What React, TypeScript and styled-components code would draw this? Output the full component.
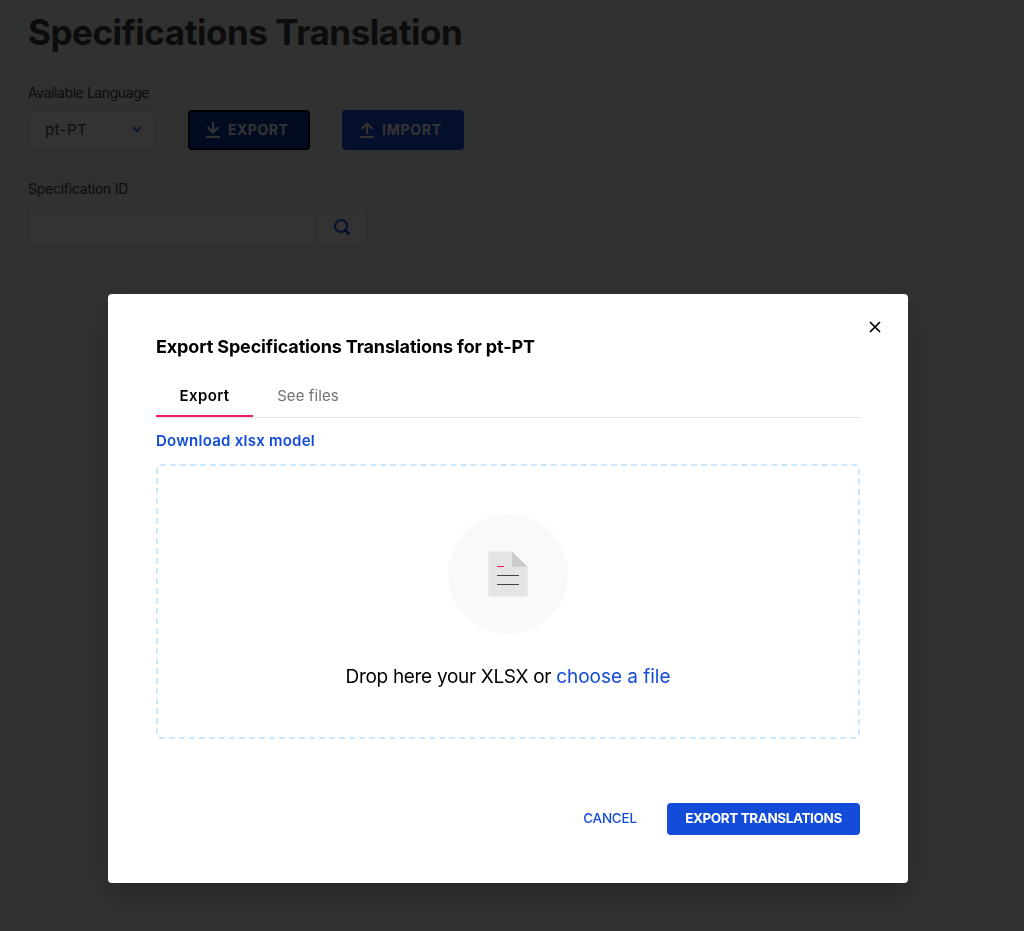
import React from 'react';
import styled, { createGlobalStyle } from 'styled-components';

const GlobalStyle = createGlobalStyle`
  *, *::before, *::after { box-sizing: border-box; }
  html, body { margin: 0; height: 100%; overflow: hidden; background: #f0f4f2; }
  body { font-family: Inter, "Liberation Sans", sans-serif; color: #3f3f40; }
  button, input { font-family: inherit; margin: 0; }
  h1, h2, p { margin: 0; }
`;

const Page = styled.main`
  height: 931px;
  padding: 8px 28px;
  display: flex;
  flex-direction: column;
  align-items: flex-start;
`;

const PageTitle = styled.h1`
  font-size: 35px;
  line-height: 48px;
  font-weight: 700;
  letter-spacing: -0.47px;
  white-space: nowrap;
`;

const Label = styled.label<{ $spacing: string }>`
  display: block;
  height: 20px;
  font-size: 14px;
  line-height: 20px;
  letter-spacing: ${p => p.$spacing};
  white-space: nowrap;
`;

const ControlRow = styled.div`
  display: flex;
  align-items: flex-end;
  gap: 32px;
  margin-top: 27px;
`;

const LanguageField = styled.div`
  width: 128px;
`;

const Select = styled.div`
  display: flex;
  align-items: center;
  justify-content: space-between;
  height: 40px;
  margin-top: 7px;
  padding: 0 12px 1px 15px;
  border: 2px solid #e7ecea;
  border-radius: 4px;
  background: #fff;
  font-size: 15px;
  letter-spacing: 0.4px;
`;

const ActionButton = styled.button<{ $focused?: boolean }>`
  display: flex;
  align-items: center;
  gap: 6px;
  width: 122px;
  height: 40px;
  padding: 0 0 1px ${p => (p.$focused ? '14px' : '16px')};
  border: ${p => (p.$focused ? '2px solid #000' : '0')};
  border-radius: 4px;
  background: ${p => (p.$focused ? '#0c389f' : '#134cd8')};
  color: #fff;
  font-size: 14px;
  font-weight: 700;
  letter-spacing: ${p => (p.$focused ? '0.5px' : '0.75px')};
`;

const SpecificationField = styled.div`
  margin-top: 29px;
`;

const SearchGroup = styled.div`
  display: flex;
  width: 340px;
  height: 40px;
  margin-top: 8px;
  border: 2px solid #e7ecea;
  border-radius: 4px;
  background: #fff;
`;

const SearchInput = styled.input`
  flex: 1;
  min-width: 0;
  border: 0;
  border-right: 2px solid #e7ecea;
  background: transparent;
`;

const SearchButton = styled.button`
  display: flex;
  align-items: center;
  justify-content: center;
  width: 48px;
  padding: 0;
  border: 0;
  background: transparent;
`;

const Overlay = styled.div`
  position: fixed;
  inset: 0;
  display: flex;
  justify-content: center;
  align-items: flex-start;
  padding: 294px 8px 0 0;
  background: rgba(0, 0, 0, 0.8);
`;

const Dialog = styled.section`
  display: flex;
  flex-direction: column;
  width: 800px;
  height: 589px;
  padding: 20px 48px 48px;
  border-radius: 4px;
  background: #fff;
  color: #000;
  box-shadow: 0 12px 24px rgba(0, 0, 0, 0.22);
`;

const CloseButton = styled.button`
  display: flex;
  align-self: flex-end;
  margin-right: -28px;
  padding: 4px;
  border: 0;
  background: transparent;
`;

const DialogTitle = styled.h2`
  height: 24px;
  margin-top: -5px;
  font-size: 18px;
  line-height: 24px;
  font-weight: 700;
  letter-spacing: -0.15px;
  white-space: nowrap;
`;

const Tabs = styled.div`
  display: flex;
  height: 42px;
  margin-top: 17px;
  border-bottom: 1px solid #e3e4e6;
`;

const Tab = styled.button<{ $active?: boolean }>`
  width: ${p => (p.$active ? '97px' : '110px')};
  height: 41px;
  padding: 0 0 1px;
  border: 0;
  border-bottom: 2px solid ${p => (p.$active ? '#f71963' : 'transparent')};
  background: transparent;
  color: ${p => (p.$active ? '#000' : '#727273')};
  font-size: 15px;
  font-weight: ${p => (p.$active ? 600 : 400)};
  letter-spacing: ${p => (p.$active ? '0.4px' : '0.1px')};
`;

const ModelLink = styled.a`
  align-self: flex-start;
  height: 20px;
  margin-top: 13px;
  color: #134cd8;
  font-size: 15px;
  line-height: 20px;
  font-weight: 600;
  letter-spacing: 0.25px;
  white-space: nowrap;
`;

const DropZone = styled.div`
  display: flex;
  flex-direction: column;
  align-items: center;
  height: 275px;
  margin-top: 13px;
  padding-top: 48px;
  border: 2px dashed #cce8ff;
  border-radius: 4px;
`;

const DropText = styled.p`
  margin-top: 28px;
  font-size: 19px;
  line-height: 30px;
  letter-spacing: -0.31px;
  white-space: nowrap;
`;

const FileLink = styled.a`
  color: #134cd8;
  letter-spacing: -0.03px;
`;

const Footer = styled.footer`
  display: flex;
  justify-content: flex-end;
  gap: 12px;
  margin-top: 64px;
`;

const FooterButton = styled.button<{ $primary?: boolean }>`
  width: ${p => (p.$primary ? '193px' : '90px')};
  height: 32px;
  padding: 0 0 2px;
  border: 0;
  border-radius: 4px;
  background: ${p => (p.$primary ? '#134cd8' : 'transparent')};
  color: ${p => (p.$primary ? '#fff' : '#134cd8')};
  font-size: 13.5px;
  font-weight: ${p => (p.$primary ? 700 : 500)};
  letter-spacing: ${p => (p.$primary ? '-0.4px' : '-0.25px')};
  white-space: nowrap;
`;

const TransferIcon = ({ up }: { up?: boolean }) => (
  <svg width="18" height="18" viewBox="0 0 18 18" fill="none" stroke="currentColor" strokeWidth="2">
    <path d={up ? 'M9 13V2.5M3.5 8L9 2.5 14.5 8' : 'M9 1v10.5M3.5 6L9 11.5 14.5 6'} />
    <path d="M2 16h14" />
  </svg>
);

const DocumentIllustration = () => (
  <svg width="120" height="120" viewBox="0 0 120 120">
    <circle cx="60" cy="60" r="60" fill="#f7f9fa" />
    <path d="M41.4 37.5H64l15.6 15.3v28.8a1 1 0 0 1-1 1H41.4a1 1 0 0 1-1-1V38.5a1 1 0 0 1 1-1z" fill="#e3e4e6" />
    <path d="M64 37.5l15.6 15.3H64z" fill="#cacbcc" />
    <path d="M49 52.5h7" stroke="#f71963" />
    <path d="M49 61.5h22M49 70.5h22" stroke="#3f3f40" />
  </svg>
);

export default function App() {
  return (
    <>
      <GlobalStyle />
      <Page>
        <PageTitle>Specifications Translation</PageTitle>
        <ControlRow>
          <LanguageField>
            <Label $spacing="-0.42px">Available Language</Label>
            <Select>
              pt-PT
              <svg width="10" height="7" viewBox="0 0 10 7" fill="none" stroke="#134cd8" strokeWidth="1.7">
                <path d="M1 1l4 4 4-4" />
              </svg>
            </Select>
          </LanguageField>
          <ActionButton $focused><TransferIcon />EXPORT</ActionButton>
          <ActionButton><TransferIcon up />IMPORT</ActionButton>
        </ControlRow>
        <SpecificationField>
          <Label $spacing="-0.25px">Specification ID</Label>
          <SearchGroup>
            <SearchInput aria-label="Specification ID" />
            <SearchButton aria-label="Search">
              <svg width="16" height="16" viewBox="0 0 16 16" fill="none" stroke="#134cd8" strokeWidth="2">
                <circle cx="7" cy="7" r="6" />
                <path d="M11.3 11.3l3.2 3.2" strokeWidth="2.8" strokeLinecap="round" />
              </svg>
            </SearchButton>
          </SearchGroup>
        </SpecificationField>
      </Page>
      <Overlay>
        <Dialog role="dialog">
          <CloseButton aria-label="Close">
            <svg width="18" height="18" viewBox="0 0 18 18" fill="none" stroke="#000" strokeWidth="1.7">
              <path d="M4 4l10 10M14 4L4 14" />
            </svg>
          </CloseButton>
          <DialogTitle>Export Specifications Translations for pt-PT</DialogTitle>
          <Tabs>
            <Tab $active>Export</Tab>
            <Tab>See files</Tab>
          </Tabs>
          <ModelLink>Download xlsx model</ModelLink>
          <DropZone>
            <DocumentIllustration />
            <DropText>Drop here your XLSX or <FileLink>choose a file</FileLink></DropText>
          </DropZone>
          <Footer>
            <FooterButton>CANCEL</FooterButton>
            <FooterButton $primary>EXPORT TRANSLATIONS</FooterButton>
          </Footer>
        </Dialog>
      </Overlay>
    </>
  );
}
